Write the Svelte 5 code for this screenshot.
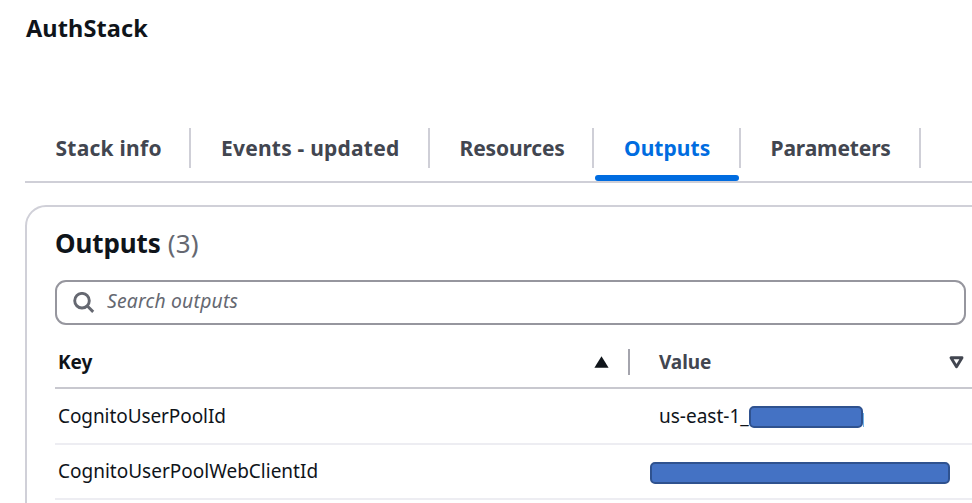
<script>
  const tabs = [
    { label: 'Stack info', width: 165.5, pad: 30.5, spacing: 0.25 },
    { label: 'Events - updated', width: 239, pad: 30.5, spacing: 0.22 },
    { label: 'Resources', width: 164, pad: 30, spacing: -0.15 },
    { label: 'Outputs', width: 147, pad: 30.5, spacing: 0.05, active: true },
    { label: 'Parameters', width: 180, pad: 30, spacing: -0.15 }
  ];
  const rows = [
    { key: 'CognitoUserPoolId', value: 'us-east-1_', mask: 'short' },
    { key: 'CognitoUserPoolWebClientId', value: '', mask: 'long' }
  ];
</script>

<main>
  <h1><span>AuthStack</span></h1>
  <nav>
    {#each tabs as tab}
      <button class="tab" class:active={tab.active} style="width: {tab.width}px; padding-left: {tab.pad}px; letter-spacing: {tab.spacing}px">
        <span>{tab.label}</span>
      </button>
    {/each}
  </nav>
  <section>
    <h2><span class="title">Outputs</span><span class="count">(3)</span></h2>
    <div class="search">
      <svg width="22" height="22" viewBox="0 0 22 22" fill="none" stroke="#656871" stroke-width="2.9">
        <circle cx="9" cy="8.7" r="7.3" />
        <path d="M14.1 13.8L20.2 19.9" />
      </svg>
      <span>Search outputs</span>
    </div>
    <div class="row head">
      <div class="key">
        <span class="k">Key</span>
        <svg width="15" height="12" viewBox="0 0 15 12"><path d="M7.5 0.2L14.6 11.8H0.4Z" fill="#0f141a" /></svg>
        <i></i>
      </div>
      <div class="val">
        <span class="v">Value</span>
        <svg width="15" height="13" viewBox="0 0 15 13"><path d="M2 1.7H13L7.5 10.7Z" fill="none" stroke="#424650" stroke-width="2.9" stroke-linejoin="round" /></svg>
      </div>
    </div>
    {#each rows as row}
      <div class="row {row.mask}-row">
        <div class="key"><span class="text">{row.key}</span></div>
        <div class="val"><span class="text value">{row.value}</span><b class={row.mask}></b></div>
      </div>
    {/each}
  </section>
</main>

<style>
  :global(body) { margin: 0; background: #fff; overflow: hidden; }
  main {
    width: 972px; height: 503px; overflow: hidden; box-sizing: border-box; padding-left: 25px;
    font-family: "Noto Sans", "Open Sans", sans-serif; color: #0f141a; background: #fff;
  }
  h1 { margin: 0; height: 128px; padding: 12px 0 0 1px; box-sizing: border-box; font-size: 23.5px; line-height: 32px; font-weight: 700; letter-spacing: 0.1px; }
  nav { height: 55px; box-sizing: border-box; border-bottom: 2px solid #cfcfd7; display: flex; }
  .tab {
    position: relative; height: 40px; flex: none; box-sizing: border-box; padding: 0; border: 0;
    border-right: 2px solid #cfcfd7; background: none; text-align: left; white-space: nowrap;
    font: 700 21px/40px "Noto Sans", sans-serif; color: #424650;
  }
  .tab.active { color: #006ce0; }
  .active::after { content: ""; position: absolute; left: 1px; right: 0; top: 47px; height: 6px; border-radius: 3px; background: #006ce0; }
  section {
    margin-top: 22px; height: 340px; width: 1000px; box-sizing: border-box; padding: 19px 0 0 28px;
    border: 2px solid #d0d0d8; border-radius: 21px 0 0 0;
  }
  h2 { margin: 0; height: 54px; font-size: 26px; line-height: 35px; font-weight: 700; letter-spacing: -0.1px; display: flex; gap: 7px; }
  .count { color: #656871; font-weight: 400; letter-spacing: 0.2px; }
  .search {
    width: 911px; height: 45px; box-sizing: border-box; border: 2px solid #96969e; border-radius: 11px;
    display: flex; align-items: center; padding-left: 16px; gap: 12px; font-size: 19.3px; font-style: italic; color: #656871;
  }
  .search span { line-height: 26px; margin-top: -3px; letter-spacing: 0.22px; }
  .row { height: 56px; box-sizing: border-box; border-bottom: 2px solid #ededf2; display: flex; font-size: 19px; line-height: 54px; }
  .head { height: 64px; border-bottom-color: #c8c8cf; padding-top: 12px; font-weight: 700; }
  .k, .v { letter-spacing: -0.1px; }
  .long-row { height: 55px; }
  .long-row .text { position: relative; top: -1px; }
  .key { width: 575px; flex: none; padding-left: 3px; box-sizing: border-box; display: flex; align-items: center; letter-spacing: -0.08px; }
  .long-row .key { letter-spacing: 0; }
  .head .key svg { margin-left: auto; margin-right: 19px; }
  .head i { width: 2px; height: 26px; background: #a4a4ad; }
  .val { flex: 1; padding-left: 29px; display: flex; align-items: center; }
  .v { color: #424650; width: 290px; }
  b { height: 22px; margin-top: 2px; box-sizing: border-box; border: 2px solid #2f528f; border-radius: 5px; background: #4472c4; }
  .short { width: 114px; position: relative; }
  .short::after { content: ""; position: absolute; right: -3px; top: 5px; width: 1px; height: 14px; background: #6fb3ea; }
  .value { white-space: pre; }
  .long { width: 300px; margin-left: -9px; }
</style>
